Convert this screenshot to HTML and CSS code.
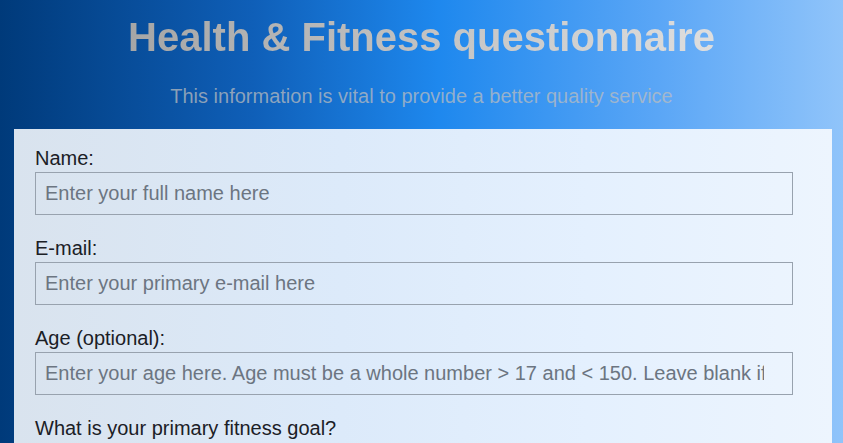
FILE: index.html
```html
<!DOCTYPE html>
<html lang="en">
<head>
<meta charset="utf-8">
<title>Health &amp; Fitness questionnaire</title>
<link rel="stylesheet" href="styles.css">
</head>
<body>
<header class="header">
  <h1 class="title">Health &amp; Fitness questionnaire</h1>
  <p class="subtitle">This information is vital to provide a better quality service</p>
</header>
<form class="card">
  <label class="label" for="name">Name:</label>
  <input class="field" id="name" type="text" placeholder="Enter your full name here">
  <label class="label" for="email">E-mail:</label>
  <input class="field" id="email" type="email" placeholder="Enter your primary e-mail here">
  <label class="label" for="age">Age (optional):</label>
  <input class="field field-age" id="age" type="text" inputmode="numeric" placeholder="Enter your age here. Age must be a whole number &gt; 17 and &lt; 150. Leave blank if you prefer not to say">
  <p class="question">What is your primary fitness goal?</p>
</form>
</body>
</html>
```
FILE: styles.css
```css
html, body {
  margin: 0;
  padding: 0;
}
body {
  font-family: "Liberation Sans", Arial, sans-serif;
  background: linear-gradient(to right, #003a7a 0%, #0f5fb8 30%, #1e88ee 52%, #5aa6f6 78%, #90c4fa 100%);
  min-height: 100vh;
  overflow: hidden;
}
.header {
  display: flex;
  flex-direction: column;
  align-items: center;
  padding-top: 14px;
}
.title {
  margin: 0;
  font-size: 40px;
  font-weight: bold;
  line-height: 46px;
  background: linear-gradient(to right, #a6a6a6, #dedede);
  -webkit-background-clip: text;
  background-clip: text;
  color: transparent;
}
.subtitle {
  margin: 25px 0 0;
  font-size: 20px;
  line-height: 23px;
  color: rgba(190, 190, 190, 0.72);
}
.card {
  margin: 21px 11px 0 14px;
  padding: 18px 39px 20px 21px;
  background: linear-gradient(to right, #d9e3ee 0%, #dceafa 40%, #e4f0fe 70%, #edf5fe 100%);
  display: flex;
  flex-direction: column;
}
.label {
  display: block;
  font-size: 20px;
  line-height: 23px;
  color: #1b2026;
  margin-bottom: 2px;
}
.field {
  display: block;
  width: 100%;
  box-sizing: border-box;
  height: 43px;
  margin: 0 0 22px;
  padding: 0 9px;
  font-family: "Liberation Sans", Arial, sans-serif;
  font-size: 20px;
  color: #1b2026;
  background: transparent;
  border: 1px solid #98a2ae;
  border-radius: 0;
  outline: none;
}
.field-age {
  padding-right: 28px;
}
.field::placeholder {
  color: #6c7581;
  opacity: 1;
}
.question {
  margin: 0;
  font-size: 20px;
  line-height: 23px;
  color: #1b2026;
}
```
